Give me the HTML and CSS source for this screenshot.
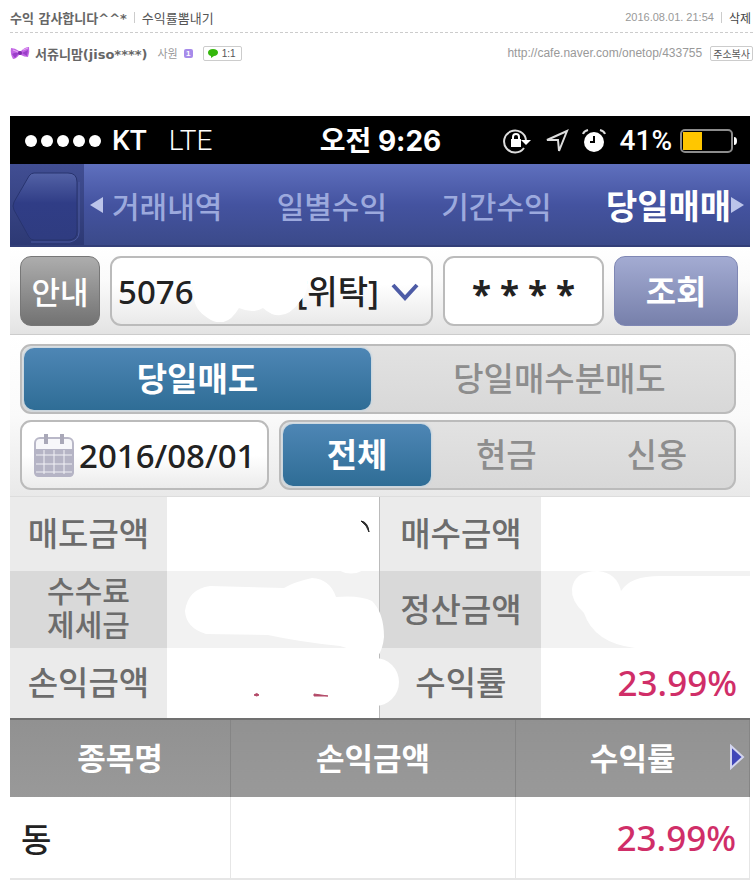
FILE: index.html
```html
<!DOCTYPE html>
<html lang="ko">
<head>
    <meta charset="UTF-8">
    <meta name="viewport" content="width=device-width, initial-scale=1.0">
    <title>수익 감사합니다^^*</title>
    <link rel="stylesheet" href="styles.css">
</head>
<body>
    <header class="post-header">
        <div class="post-row post-title">
            <h1>수익 감사합니다^^*</h1>
            <span class="bar"></span>
            <a class="board" href="#">수익률뽐내기</a>
            <span class="date">2016.08.01. 21:54</span>
            <span class="bar"></span>
            <a class="delete" href="#">삭제</a>
        </div>
        <div class="post-row post-writer">
            <svg class="ribbon" viewBox="0 0 20 14" width="20" height="14">
                <path d="M1 2 Q5 2 9 5 L11 5 Q15 1 19 1 Q20 6 18 11 Q14 11 11 9 L9 9 Q6 13 3 13 Q0 8 1 2Z" fill="#c266e4"/>
                <path d="M2 8 Q5 6 9 7 L5 12Z M12 7 L18 4 L17 10Z" fill="#9a3fc9"/>
                <path d="M3 4 L8 6 M13 4 L18 2" stroke="#e5a9f5" stroke-width="1"/>
                <circle cx="10" cy="7" r="2" fill="#7c2caa"/>
            </svg>
            <a class="writer" href="#">서쥬니맘(jiso****)</a>
            <span class="grade">사원</span>
            <span class="level">1</span>
            <button class="chat">
                <svg viewBox="0 0 10 9" width="10" height="9"><path d="M5 0 C8 0 10 1.500 10 3.500 C10 5.500 8 7 6 7 L3 9 L3 7 C1 6.500 0 5.500 0 3.500 C0 1.500 2 0 5 0Z" fill="#35b80c"/></svg>
                1:1
            </button>
            <a class="url" href="#">http://cafe.naver.com/onetop/433755</a>
            <button class="copy">주소복사</button>
        </div>
    </header>

    <main class="phone">
        <div class="status">
            <div class="status-side">
                <svg viewBox="0 0 78 14" width="78" height="14" fill="#fff">
                    <circle cx="7" cy="7" r="6"/><circle cx="23" cy="7" r="6"/><circle cx="39" cy="7" r="6"/><circle cx="55" cy="7" r="6"/><circle cx="71" cy="7" r="6"/>
                </svg>
                <span class="carrier">KT</span>
                <span class="network">LTE</span>
            </div>
            <div class="clock">오전 9:26</div>
            <div class="status-side status-right">
                <svg viewBox="0 0 28 26" width="28" height="26">
                    <path d="M21 20 A11 11 0 1 1 23 12" fill="none" stroke="#ddd" stroke-width="2"/>
                    <path d="M18 12 L28 12 L23 17Z" fill="#fff"/>
                    <rect x="8" y="11" width="10" height="8" fill="#fff"/>
                    <path d="M10 12 V9 A3 3 0 0 1 16 9 V12" fill="none" stroke="#fff" stroke-width="2"/>
                </svg>
                <svg class="location" viewBox="0 0 24 24" width="24" height="24"><path d="M2 11 L22 2 L14 22 L13 11Z" fill="none" stroke="#ddd" stroke-width="2"/></svg>
                <svg class="alarm" viewBox="0 0 24 24" width="24" height="24">
                    <circle cx="12" cy="13" r="10" fill="#fff"/>
                    <path d="M12 7 V13 H8" fill="none" stroke="#000" stroke-width="2"/>
                    <path d="M1 5 Q2 2 6 1 M18 1 Q22 2 23 5" fill="none" stroke="#ddd" stroke-width="2"/>
                </svg>
                <span class="percent">41%</span>
                <svg viewBox="0 0 57 24" width="57" height="24">
                    <rect x="1" y="1" width="51" height="22" rx="4" fill="none" stroke="#8c8c8c" stroke-width="2"/>
                    <rect x="3" y="3" width="19" height="18" fill="#ffc600"/>
                    <path d="M54 8 Q57 8 57 12 Q57 16 54 16Z" fill="#fff"/>
                </svg>
            </div>
        </div>

        <nav class="tabs">
            <button class="back" aria-label="뒤로">
                <svg viewBox="0 0 74 84" width="74" height="84">
                    <defs>
                        <linearGradient id="backFill" x1="0" y1="0" x2="0" y2="1">
                            <stop offset="0" stop-color="#5362a6"/>
                            <stop offset="0.450" stop-color="#303d86"/>
                            <stop offset="1" stop-color="#2f3c80"/>
                        </linearGradient>
                    </defs>
                    <path d="M24 9 H58 Q67 9 67 18 V67 Q67 76 58 76 H24 Q21 76 19 73 L4 46 Q2 42 4 38 L19 12 Q21 9 24 9Z" fill="url(#backFill)" stroke="#28346f" stroke-width="1"/>
                    <path d="M21 78 H60 Q69 76 69 68 V18" fill="none" stroke="#4c5ba2" stroke-width="1"/>
                </svg>
            </button>
            <svg class="prev" viewBox="0 0 13 16" width="13" height="16"><path d="M13 0 V16 L0 8Z" fill="#bcc5ea"/></svg>
            <div class="tab-list">
                <a href="#">거래내역</a>
                <a href="#">일별수익</a>
                <a href="#">기간수익</a>
                <a class="on" href="#">당일매매</a>
            </div>
            <svg viewBox="0 0 13 16" width="13" height="16"><path d="M0 0 V16 L13 8Z" fill="#bcc5ea"/></svg>
        </nav>

        <form class="account">
            <button class="guide" type="button">안내</button>
            <div class="account-select">
                <select aria-label="계좌">
                    <option>5076&nbsp;&nbsp;&nbsp;&nbsp;&nbsp;&nbsp;&nbsp;&nbsp;&nbsp;&nbsp;&nbsp;&nbsp;[위탁]</option>
                </select>
                <svg class="eraser" viewBox="0 0 116 62" width="116" height="62" fill="#fff">
                    <path d="M1 0 H108 Q114 8 114 20 Q115 34 108 40 Q90 66 70 48 Q60 54 46 48 Q32 72 12 56 Q0 48 0 30Z"/>
                </svg>
                <svg class="chevron" viewBox="0 0 28 18" width="28" height="18"><path d="M2 2 L14 15 L26 2" fill="none" stroke="#4d5ba6" stroke-width="4"/></svg>
            </div>
            <input class="password" type="text" value="* * * *" aria-label="비밀번호">
            <button class="search" type="button">조회</button>
        </form>

        <section class="filters">
            <div class="segment">
                <button class="on">당일매도</button>
                <button>당일매수분매도</button>
            </div>
            <div class="filter-row">
                <label class="date-box">
                    <svg viewBox="0 0 40 45" width="40" height="45">
                        <rect x="1" y="5" width="38" height="38" rx="5" fill="#f7f7fa" stroke="#b9b8c8" stroke-width="2"/>
                        <path d="M0 16 H40 V39 Q40 44 35 44 H5 Q0 44 0 39Z" fill="#b5b4c5"/>
                        <path d="M10 17 V41 M20 17 V41 M30 17 V41 M2 22 H38 M2 31 H38 M2 39 H38" stroke="#f1f1f6" stroke-width="1"/>
                        <path d="M12 1 V11 M28 1 V11" stroke="#a9a8b8" stroke-width="4"/>
                    </svg>
                    <input type="text" value="2016/08/01" aria-label="조회일">
                </label>
                <div class="segment segment-three">
                    <button class="on">전체</button>
                    <button>현금</button>
                    <button>신용</button>
                </div>
            </div>
        </section>

        <section class="summary">
            <table>
                <tr>
                    <th class="c1">매도금액</th>
                    <td class="c2"></td>
                    <th class="c3">매수금액</th>
                    <td class="c4"></td>
                </tr>
                <tr class="even">
                    <th class="two-line">수수료<br>제세금</th>
                    <td></td>
                    <th>정산금액</th>
                    <td></td>
                </tr>
                <tr class="last">
                    <th>손익금액</th>
                    <td></td>
                    <th>수익률</th>
                    <td class="up">23.99%</td>
                </tr>
            </table>
            <svg class="marks" viewBox="0 0 740 221" preserveAspectRatio="none">
                <g fill="#fff">
                    <path d="M200 89 L274 91 Q284 85 302 81 Q320 82 326 100 Q350 98 362 104 Q374 116 374 140 Q373 152 367 161 V221 H340 V152 L330 149 Q290 145 258 138 L196 137 Q176 131 175 114 Q178 92 200 89Z"/>
                    <path d="M328 73 Q341 80 354 73Z"/>
                    <circle cx="365" cy="185" r="24"/>
                    <path d="M562 92 Q564 74 588 74 Q607 76 611 94 Q620 79 650 79 H740 V151 H625 Q584 146 574 116 Q561 104 562 92Z"/>
                </g>
                <path d="M351 24 Q358 25 359 35 Q357 28 351 24Z" fill="#222" stroke="#222"/>
                <path d="M244 198 Q247 195 249 198 Q247 200 244 198Z M304 197 L318 199 L304 199Z" fill="#b34a68" stroke="#b34a68"/>
            </svg>
        </section>

        <table class="stocks">
            <thead>
                <tr>
                    <th class="name">종목명</th>
                    <th class="profit">손익금액</th>
                    <th class="rate">
                        <div class="rate-head">
                            <span>수익률</span>
                            <svg viewBox="0 0 16 26" width="16" height="26"><path d="M2 2 L14 13 L2 24Z" fill="#4046b8" stroke="#d3d5ee" stroke-width="2"/></svg>
                        </div>
                    </th>
                </tr>
            </thead>
            <tbody>
                <tr>
                    <td class="stock-name">동</td>
                    <td></td>
                    <td class="up">23.99%</td>
                </tr>
            </tbody>
        </table>
    </main>
</body>
</html>
```
FILE: styles.css
```css
* {
    box-sizing: border-box;
}
body {
    margin: 0;
    background-color: #fff;
    font-family: "Noto Sans", "Noto Sans CJK KR", sans-serif;
}
a {
    color: inherit;
    text-decoration: none;
}
button, input, select {
    font-family: inherit;
    margin: 0;
}
svg {
    display: block;
    flex: none;
}

/* post header */
.post-header {
    padding: 0 2px 0 10px;
    height: 116px;
    font-family: "Liberation Sans", "Noto Sans CJK KR", sans-serif;
    font-size: 12px;
    color: #999;
}
.post-row {
    display: flex;
    align-items: center;
    white-space: nowrap;
}
.post-title {
    height: 33px;
    padding: 2px 2px 0 0;
    border-bottom: 1px dashed #ccc;
}
.post-title h1 {
    margin: 0;
    font-family: "DejaVu Sans", "Noto Sans CJK KR", sans-serif;
    font-size: 13px;
    color: #666;
}
.bar {
    width: 1px;
    height: 11px;
    margin: 0 7px;
    background-color: #ccc;
}
.board {
    font-size: 13px;
    color: #555;
}
.date {
    margin-left: auto;
    font-size: 11px;
}
.delete {
    color: #444;
}
.post-writer {
    height: 40px;
}
.writer {
    margin: 0 10px 0 5px;
    font-family: "DejaVu Sans", "Noto Sans CJK KR", sans-serif;
    font-size: 13px;
    font-weight: bold;
    color: #666;
}
.level {
    width: 9px;
    margin-left: 6px;
    border-radius: 2px;
    background-color: #a78bea;
    color: #fff;
    font-size: 8px;
    font-weight: bold;
    line-height: 9px;
    text-align: center;
}
.grade {
    font-size: 11px;
}
.chat, .copy {
    display: flex;
    align-items: center;
    height: 15px;
    border: 1px solid #ccc;
    border-radius: 2px;
    background-color: #fff;
    color: #555;
    font-size: 10px;
}
.chat {
    gap: 4px;
    margin-left: 10px;
    padding: 0 5px 0 4px;
}
.url {
    margin-left: auto;
}
.copy {
    margin-left: 8px;
    padding: 0 2px;
}

/* phone screen */
.phone {
    margin: 0 5px 0 10px;
}
.status {
    display: flex;
    align-items: center;
    height: 48px;
    padding: 2px 13px 0 14px;
    background-color: #000;
    color: #fff;
    font-family: Roboto, "Noto Sans CJK KR", sans-serif;
    font-size: 28px;
    line-height: 30px;
}
.status-side {
    display: flex;
    flex: 1;
    align-items: center;
}
.status-right {
    justify-content: flex-end;
}
.carrier {
    margin: 0 22px 0 10px;
    font-weight: 500;
}
.network {
    font-weight: 300;
}
.clock {
    font-family: Inter, "Noto Sans CJK KR", sans-serif;
    font-weight: bold;
}
.location {
    margin-left: 14px;
}
.alarm {
    margin: 0 14px 0 13px;
}
.percent {
    margin-right: 8px;
    font-weight: 500;
}

.tabs {
    display: flex;
    align-items: center;
    height: 83px;
    padding-right: 6px;
    border-bottom: 2px solid #333f78;
    background: linear-gradient(#5f70be, #4453a0 50%, #3b4a8a);
}
.back {
    height: 81px;
    padding: 0;
    border: none;
    overflow: hidden;
    background: linear-gradient(#414e93, #2d3974);
}
.prev {
    margin: 0 9px 0 6px;
}
.tab-list {
    display: flex;
    flex: 1;
    justify-content: space-between;
    align-items: center;
    color: #9ca9dd;
    font-size: 30px;
    font-weight: 500;
}
.tab-list .on {
    color: #fff;
    font-size: 34px;
    font-weight: bold;
}

.account {
    display: grid;
    grid-template-columns: 80fr 323fr 161fr 124fr;
    gap: 10px;
    padding: 9px 12px 8px 10px;
    border-bottom: 1px solid #ccc;
    background: linear-gradient(#fff, #fafafa 40%, #e3e3e3);
}
.account button, .account select, .account input {
    width: 100%;
    min-width: 0;
    height: 70px;
    border: 2px solid #bbb;
    border-radius: 11px;
    font-size: 33px;
}
.account .guide {
    padding: 0 0 2px;
    border: 1px solid #777;
    background: linear-gradient(#adadad, #727272);
    color: #fff;
    font-size: 31px;
    font-weight: 500;
}
.account-select {
    position: relative;
}
.account-select select {
    padding: 0 6px;
    appearance: none;
    background: linear-gradient(#fff 40%, #e9e9e9);
    color: #222;
    font-weight: 500;
}
.eraser {
    position: absolute;
    left: 83px;
    top: 4px;
}
.chevron {
    position: absolute;
    right: 14px;
    top: 27px;
}
.account .password {
    padding: 4px 0 0;
    background-color: #fff;
    color: #222;
    font-size: 35px;
    font-weight: bold;
    text-align: center;
}
.account .search {
    padding: 0 0 2px;
    border: 1px solid #7f87b4;
    background: linear-gradient(#a3abd2, #7780ab);
    color: #fff;
    font-weight: bold;
}

.filters {
    padding: 9px 14px 6px 10px;
    border-bottom: 1px solid #ddd;
    background: linear-gradient(#fff, #fafafa 50%, #e9e9e9);
}
.segment {
    display: flex;
    height: 70px;
    padding: 2px;
    border: 2px solid #bbb;
    border-radius: 11px;
    background: linear-gradient(#e2e2e2, #d8d8d8);
}
.segment button {
    flex: 1;
    padding: 0 0 4px;
    border: none;
    border-radius: 10px;
    background: none;
    color: #8d8d8d;
    font-size: 33px;
    font-weight: 500;
}
.segment .on {
    flex: none;
    width: 49%;
    background: linear-gradient(#4e86b5, #2f6d96);
    box-shadow: 0 0 2px 1px #c5d5e0;
    color: #fff;
    font-weight: bold;
}
.segment .on + button:last-child {
    padding-right: 0;
    padding-left: 16px;
}
.filter-row {
    display: grid;
    grid-template-columns: 249fr 457fr;
    gap: 10px;
    margin-top: 6px;
}
.date-box {
    display: flex;
    align-items: center;
    min-width: 0;
    height: 70px;
    padding-left: 12px;
    border: 2px solid #bbb;
    border-radius: 11px;
    background: linear-gradient(#fff 50%, #ebebeb);
}
.date-box input {
    flex: 1;
    width: 0;
    padding: 0 0 0 5px;
    border: none;
    background: none;
    color: #222;
    font-size: 33px;
    font-weight: 500;
}
.segment-three .on {
    width: 33%;
}

/* summary */
.summary {
    position: relative;
}
.marks {
    position: absolute;
    left: 0;
    top: 0;
    width: 100%;
    height: 100%;
}
table {
    width: 100%;
    border-collapse: collapse;
    table-layout: fixed;
}
th, td {
    padding: 0;
}
.summary tr {
    height: 74px;
}
.summary .even {
    height: 77px;
}
.summary .last {
    height: 70px;
}
.summary th {
    background-color: #ebebeb;
    color: #6c6c6c;
    font-size: 33px;
    font-weight: 500;
    line-height: 34px;
}
.summary .even th {
    background-color: #d9d9d9;
}
.summary .even td {
    background-color: #f2f2f2;
}
.summary .two-line {
    padding-bottom: 3px;
    font-size: 30px;
}
.summary th + td + th {
    border-left: 1px solid #bbb;
}
.c1 {
    width: 21.2%;
}
.c2 {
    width: 28.8%;
}
.c3 {
    width: 21.8%;
}
.c4 {
    width: 28.2%;
}
.up {
    padding-right: 13px;
    color: #d02e68;
    font-size: 35px;
    font-weight: 500;
    line-height: 40px;
    text-align: right;
}

/* stocks */
.stocks th {
    height: 78px;
    padding-bottom: 4px;
    border-top: 2px solid #707070;
    border-right: 1px solid #858585;
    background: linear-gradient(#919191, #999);
    color: #fff;
    font-size: 31px;
    font-weight: bold;
}
.stocks td {
    height: 82px;
    border-right: 1px solid #e6e6e6;
    border-bottom: 2px solid #e6e6e6;
}
.stocks .name {
    width: 29.8%;
}
.stocks .profit {
    width: 38.6%;
}
.rate-head {
    display: flex;
    align-items: center;
    padding-right: 4px;
}
.rate-head span {
    flex: 1;
    padding-left: 20px;
}
.stock-name {
    padding-left: 11px;
    color: #222;
    font-size: 33px;
    font-weight: 500;
}
```
